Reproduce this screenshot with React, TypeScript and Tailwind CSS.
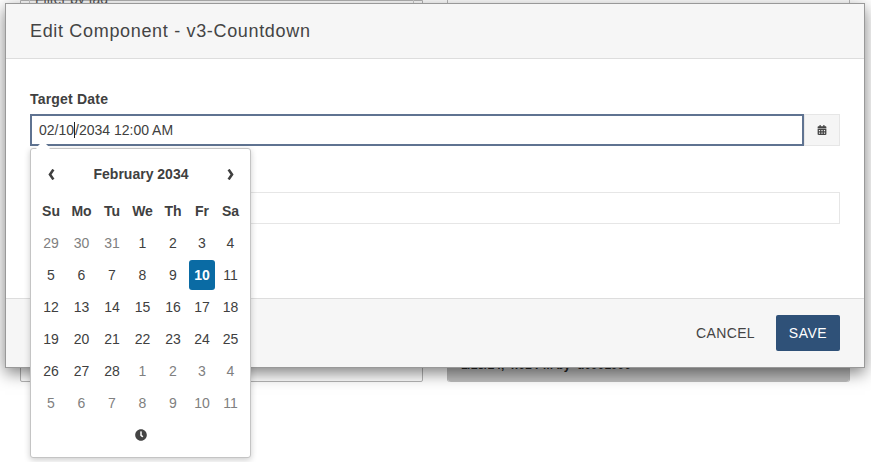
import { FaCalendarAlt, FaClock } from 'react-icons/fa'

const weekDays = ['Su', 'Mo', 'Tu', 'We', 'Th', 'Fr', 'Sa']

// day + whether it belongs to the shown month
const weeks: [number, boolean][][] = [
  [[29, false], [30, false], [31, false], [1, true], [2, true], [3, true], [4, true]],
  [[5, true], [6, true], [7, true], [8, true], [9, true], [10, true], [11, true]],
  [[12, true], [13, true], [14, true], [15, true], [16, true], [17, true], [18, true]],
  [[19, true], [20, true], [21, true], [22, true], [23, true], [24, true], [25, true]],
  [[26, true], [27, true], [28, true], [1, false], [2, false], [3, false], [4, false]],
  [[5, false], [6, false], [7, false], [8, false], [9, false], [10, false], [11, false]],
]

function Chevron({ flip }: { flip?: boolean }) {
  return (
    <svg width="7" height="11" viewBox="0 0 7 11" className={flip ? 'rotate-180' : ''}>
      <path d="M5.4 0.6 L2 5.5 L5.4 10.4" fill="none" stroke="#3f3f3f" strokeWidth="2.6" />
    </svg>
  )
}

function DatePopover() {
  return (
    <div className="absolute left-[24px] top-[144px] w-[221px] h-[310px] bg-white border border-[#c4c4c4] rounded-[3px] shadow-[0_2px_6px_rgba(0,0,0,0.2)] px-[5px] pt-[9px]">
      <div className="absolute left-[7px] top-[-6px] w-[10px] h-[10px] rotate-45 bg-white" />
      <div className="grid grid-cols-[30px_31px_30px_31px_30px_28px_29px] text-[14px] text-[#404040]">
        <div className="h-[32px] mb-[5px] flex items-center justify-center"><Chevron /></div>
        <div className="col-span-5 h-[32px] mb-[5px] flex items-center justify-center font-bold">February 2034</div>
        <div className="h-[32px] mb-[5px] flex items-center justify-center"><Chevron flip /></div>
        {weekDays.map((d) => (
          <div key={d} className="h-[32px] flex items-center justify-center font-bold">{d}</div>
        ))}
        {weeks.flat().map(([day, current], i) => (
          <div key={i} className="h-[32px] flex items-center justify-center">
            {day === 10 && current ? (
              <span className="w-[26px] h-[30px] flex items-center justify-center rounded-[3px] bg-[#0a6ba4] text-white font-bold">10</span>
            ) : (
              <span className={current ? 'text-[#404040]' : 'text-[#808080]'}>{day}</span>
            )}
          </div>
        ))}
      </div>
      <div className="h-[32px] flex items-center justify-center text-[#444]">
        <FaClock size={12} />
      </div>
    </div>
  )
}

export default function App() {
  return (
    <div className="relative w-[871px] h-[462px] overflow-hidden bg-white text-[14px] text-[#333] font-['Liberation_Sans',Arial,sans-serif]">
      {/* Page behind the dialog */}
      <div className="grid grid-cols-[403px_403px] gap-[24px] pl-[20px]">
        <div className="h-[382px] border border-[#b5b5b5] rounded-b-[2px] px-[8px]">
          <div className="-mt-[18px] h-[32px] border border-[#ccc] px-[5px] flex items-center text-[#555]">Filter by tag</div>
        </div>
        <div className="h-[382px] flex flex-col justify-end border-x border-[#bbb] rounded-b-[3px]">
          <div className="h-[36px] bg-[#bdbdbd] rounded-b-[3px] px-[13px] pt-[9px] font-bold text-[12px] leading-[20px] text-[#222]">
            1/23/24, 4:01 PM by&nbsp;&nbsp;u0901990
          </div>
        </div>
      </div>

      {/* Edit dialog */}
      <div className="absolute left-[5px] top-[3px] w-[860px] h-[365px] flex flex-col bg-white border border-[#999] shadow-[0_5px_15px_rgba(0,0,0,0.5)]">
        <div className="h-[55px] shrink-0 flex items-center px-[24px] bg-[#f6f6f6] border-b border-[#ddd]">
          <h2 className="text-[18px] tracking-[0.67px] text-[#444]">Edit Component - v3-Countdown</h2>
        </div>
        <div className="flex-1 px-[24px] pt-[30px]">
          <label className="block h-[25px] font-bold tracking-[0.2px] text-[#404040]">Target Date</label>
          <div className="flex h-[32px]">
            <div className="flex-1 flex items-center border-2 border-[#5f7391] px-[7px] text-[#404040]">
              02/10<span className="w-px h-[16px] bg-[#222]" />/2034 12:00 AM
            </div>
            <div className="w-[36px] flex items-center justify-center bg-[#f5f5f5] border border-[#e6e6e6] text-[#444]">
              <FaCalendarAlt size={10} />
            </div>
          </div>
          <div className="mt-[46px] h-[32px] border border-[#e6e6e6]" />
        </div>
        <div className="h-[69px] shrink-0 flex items-center justify-end gap-[21px] pr-[24px] bg-[#f6f6f6] border-t border-[#ddd]">
          <button className="text-[#444] tracking-[0.35px]">CANCEL</button>
          <button className="w-[64px] h-[36px] rounded-[2px] bg-[#2f5178] text-white tracking-[0.5px]">SAVE</button>
        </div>
        <DatePopover />
      </div>
    </div>
  )
}
